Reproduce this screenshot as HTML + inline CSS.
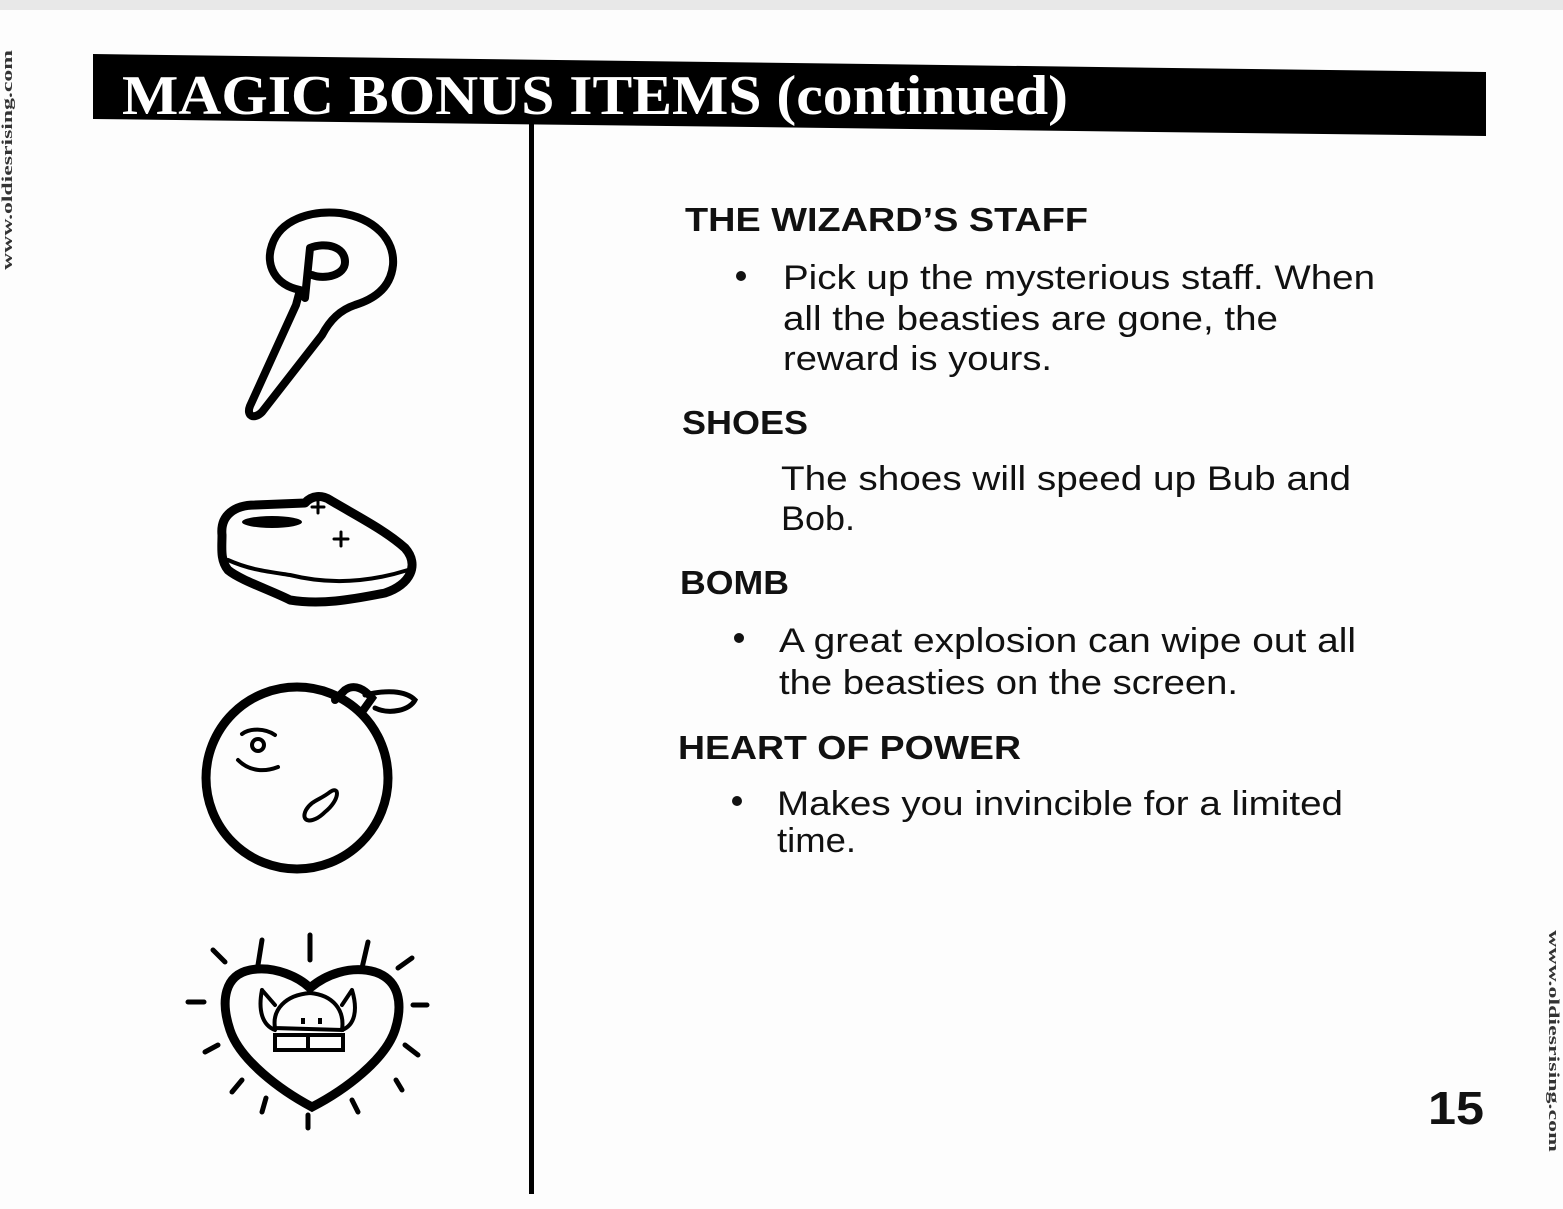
<!DOCTYPE html>
<html><head><meta charset="utf-8"><style>
html,body{margin:0;padding:0;background:#fff;}
body{width:1563px;height:1209px;overflow:hidden;position:relative;}
svg{position:absolute;left:0;top:0;}
</style></head><body>
<svg width="1563" height="1209" viewBox="0 0 1563 1209" xmlns="http://www.w3.org/2000/svg">
<rect x="0" y="0" width="1563" height="1209" fill="#fdfdfd"/>
<rect x="0" y="0" width="1563" height="10" fill="#e8e8e8"/>
<polygon points="93,54 1486,72 1486,136 93,119" fill="#000"/>
<text x="122" y="114" font-family="Liberation Serif, serif" font-weight="bold" font-size="56" fill="#fff" textLength="946" lengthAdjust="spacingAndGlyphs">MAGIC BONUS ITEMS (continued)</text>
<rect x="529" y="118" width="5" height="1076" fill="#000"/>
<text transform="translate(12,270) rotate(-90)" font-family="Liberation Serif, serif" font-weight="bold" font-size="15" fill="#333" textLength="220" lengthAdjust="spacingAndGlyphs">www.oldiesrising.com</text>
<text transform="translate(1549,930) rotate(90)" font-family="Liberation Serif, serif" font-weight="bold" font-size="15" fill="#333" textLength="222" lengthAdjust="spacingAndGlyphs">www.oldiesrising.com</text>
<g fill="#111">
<circle cx="741" cy="276" r="5"/>
<circle cx="739" cy="638" r="5"/>
<circle cx="737" cy="801" r="5"/>
</g>
<g font-family="Liberation Sans, sans-serif" fill="#111">
<text x="685" y="231" font-weight="bold" font-size="33" textLength="403" lengthAdjust="spacingAndGlyphs">THE WIZARD’S STAFF</text>
<text x="783" y="289" font-size="34" textLength="592" lengthAdjust="spacingAndGlyphs">Pick up the mysterious staff. When</text>
<text x="783" y="330" font-size="34" textLength="495" lengthAdjust="spacingAndGlyphs">all the beasties are gone, the</text>
<text x="783" y="370" font-size="34" textLength="269" lengthAdjust="spacingAndGlyphs">reward is yours.</text>
<text x="682" y="434" font-weight="bold" font-size="33" textLength="126" lengthAdjust="spacingAndGlyphs">SHOES</text>
<text x="781" y="490" font-size="34" textLength="570" lengthAdjust="spacingAndGlyphs">The shoes will speed up Bub and</text>
<text x="781" y="530" font-size="34" textLength="74" lengthAdjust="spacingAndGlyphs">Bob.</text>
<text x="680" y="594" font-weight="bold" font-size="33" textLength="109" lengthAdjust="spacingAndGlyphs">BOMB</text>
<text x="779" y="652" font-size="34" textLength="577" lengthAdjust="spacingAndGlyphs">A great explosion can wipe out all</text>
<text x="779" y="694" font-size="34" textLength="459" lengthAdjust="spacingAndGlyphs">the beasties on the screen.</text>
<text x="678" y="759" font-weight="bold" font-size="33" textLength="343" lengthAdjust="spacingAndGlyphs">HEART OF POWER</text>
<text x="777" y="815" font-size="34" textLength="566" lengthAdjust="spacingAndGlyphs">Makes you invincible for a limited</text>
<text x="777" y="852" font-size="34" textLength="79" lengthAdjust="spacingAndGlyphs">time.</text>
<text x="1428" y="1124" font-weight="bold" font-size="46" textLength="56" lengthAdjust="spacingAndGlyphs">15</text>
</g>
<g fill="none" stroke="#000" stroke-width="8" stroke-linejoin="round" stroke-linecap="round">
<path d="M300,290 C275,285 265,265 272,245 C280,220 310,210 340,213 C375,218 395,240 393,265 C391,285 378,298 355,305 C340,310 330,320 322,335 L262,412 C254,420 246,416 250,406 L296,305 Z"/>
<path d="M305,298 L310,248 C325,242 345,246 345,262 C345,275 325,280 312,275"/>
</g>
<g fill="none" stroke="#000" stroke-linejoin="round" stroke-linecap="round">
<path stroke-width="9" d="M222,535 C220,515 235,505 255,505 L305,503 C312,495 322,495 330,500 C355,515 385,530 405,548 C420,565 410,585 385,593 C350,600 320,605 290,600 C270,590 240,580 228,570 C220,560 222,548 222,535 Z"/>
<path stroke-width="4" d="M228,560 C250,570 270,572 290,575 C330,585 370,582 408,570"/>
<ellipse cx="272" cy="522" rx="30" ry="6" fill="#000" stroke="none"/>
<path stroke-width="3" d="M312,507 h12 M318,501 v12 M334,539 h14 M341,532 v14"/>
</g>
<g fill="none" stroke="#000" stroke-linecap="round">
<circle cx="297" cy="778" r="91" stroke-width="9"/>
<path stroke-width="8" d="M335,700 L345,690 C355,683 365,690 372,698 L362,712"/>
<path stroke-width="5" d="M365,695 C385,690 405,690 415,700 C410,710 390,715 375,708"/>
<path stroke-width="4" d="M242,734 C250,728 265,728 275,735 M238,760 C250,772 265,772 278,767"/>
<circle cx="258" cy="745" r="6" stroke-width="4"/>
<path stroke-width="4" d="M330,792 C340,785 340,800 325,812 C312,825 300,822 306,810 C312,800 320,800 330,792"/>
</g>
<g fill="none" stroke="#000" stroke-linecap="round">
<path stroke-width="9" d="M312,1107 C280,1090 240,1060 230,1030 C220,1000 225,975 250,970 C275,965 300,978 310,988 C325,975 350,965 375,972 C400,980 403,1005 395,1030 C385,1060 345,1090 312,1107 Z"/>
<path stroke-width="5" d="M258,965 L262,940 M310,935 L310,960 M362,968 L368,942 M213,950 L225,962 M398,968 L412,958 M188,1002 L204,1002 M413,1005 L427,1005 M205,1052 L218,1045 M405,1045 L418,1055 M232,1092 L242,1080 M396,1080 L402,1090 M262,1112 L266,1098 M352,1100 L358,1112 M308,1115 L308,1128"/>
<path stroke-width="4" d="M262,990 C258,1010 262,1025 275,1030 M352,990 C358,1010 355,1025 342,1030 M275,1028 C272,1010 285,995 310,993 C333,995 345,1010 342,1030 Z M275,1035 h68 v15 h-68 Z M308,1035 v15 M262,990 L275,1005 M352,990 L342,1005"/>
<rect x="301" y="1018" width="4" height="6" fill="#000" stroke="none"/>
<rect x="318" y="1018" width="4" height="6" fill="#000" stroke="none"/>
</g>
</svg>
</body></html>
